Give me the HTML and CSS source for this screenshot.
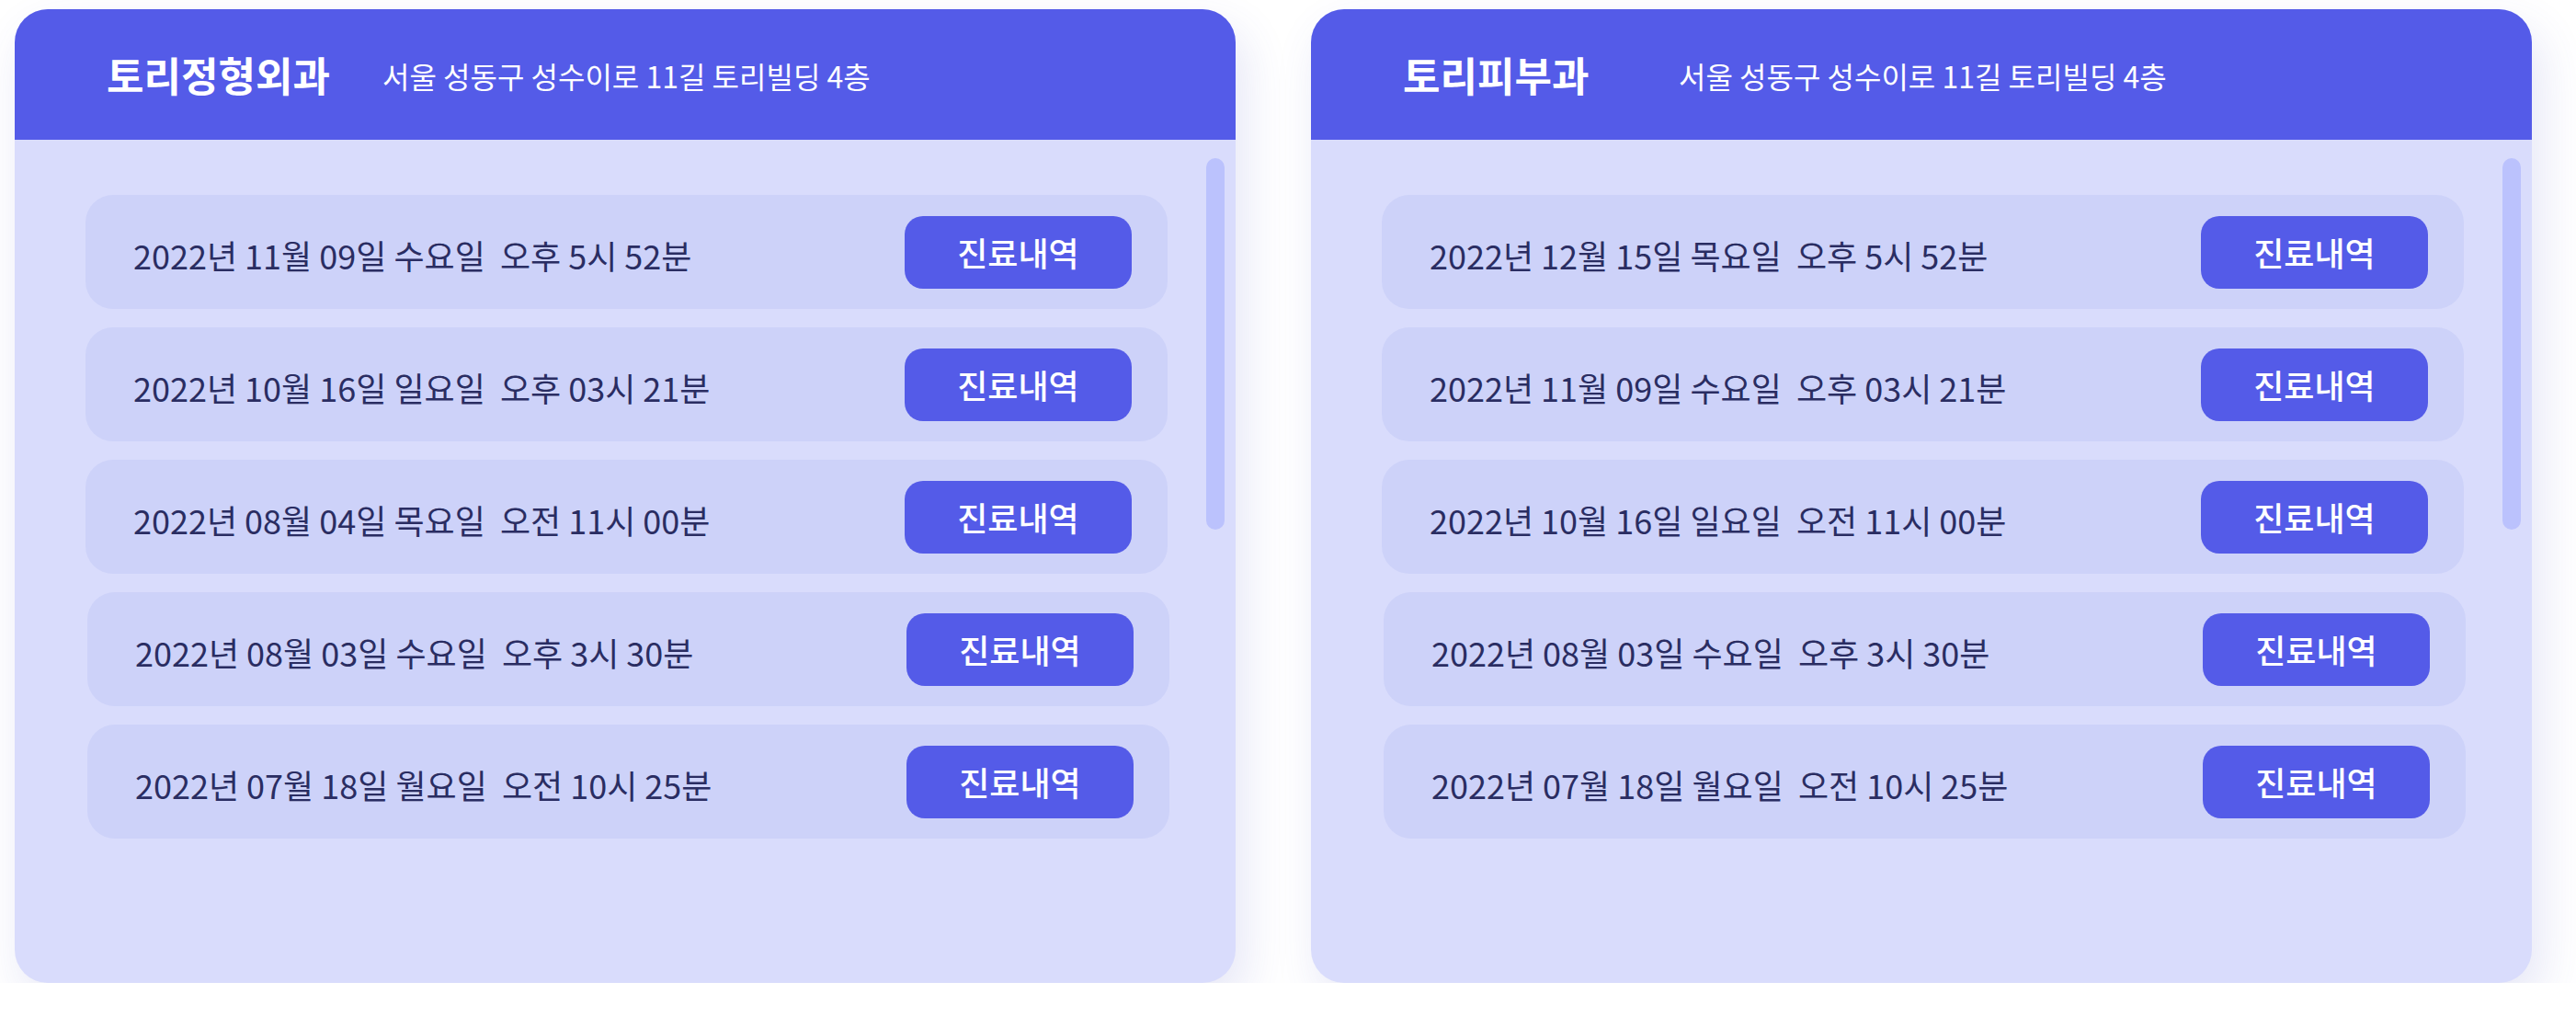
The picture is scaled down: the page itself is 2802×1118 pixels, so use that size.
FILE: index.html
```html
<!DOCTYPE html>
<html>
  <head>
    <meta charset="utf-8">
    <title>진료 예약 내역</title>
    <link rel="stylesheet" href="styles.css">
  </head>
  <body>
    <div class="page">

      <!-- 토리정형외과 -->
      <section class="card">
        <header class="card-head">
          <h2 class="clinic-name">토리정형외과</h2>
          <p class="clinic-addr">서울 성동구 성수이로 11길 토리빌딩 4층</p>
        </header>
        <div class="card-body">
          <ul class="visits">
            <li class="visit">
              <span class="visit-date">2022년 11월 09일 수요일&nbsp; 오후 5시 52분</span>
              <button class="btn">진료내역</button>
            </li>
            <li class="visit">
              <span class="visit-date">2022년 10월 16일 일요일&nbsp; 오후 03시 21분</span>
              <button class="btn">진료내역</button>
            </li>
            <li class="visit">
              <span class="visit-date">2022년 08월 04일 목요일&nbsp; 오전 11시 00분</span>
              <button class="btn">진료내역</button>
            </li>
            <li class="visit nudge">
              <span class="visit-date">2022년 08월 03일 수요일&nbsp; 오후 3시 30분</span>
              <button class="btn">진료내역</button>
            </li>
            <li class="visit nudge">
              <span class="visit-date">2022년 07월 18일 월요일&nbsp; 오전 10시 25분</span>
              <button class="btn">진료내역</button>
            </li>
          </ul>
          <div class="thumb"></div>
        </div>
      </section>

      <!-- 토리피부과 -->
      <section class="card">
        <header class="card-head">
          <h2 class="clinic-name">토리피부과</h2>
          <p class="clinic-addr">서울 성동구 성수이로 11길 토리빌딩 4층</p>
        </header>
        <div class="card-body">
          <ul class="visits">
            <li class="visit">
              <span class="visit-date">2022년 12월 15일 목요일&nbsp; 오후 5시 52분</span>
              <button class="btn">진료내역</button>
            </li>
            <li class="visit">
              <span class="visit-date">2022년 11월 09일 수요일&nbsp; 오후 03시 21분</span>
              <button class="btn">진료내역</button>
            </li>
            <li class="visit">
              <span class="visit-date">2022년 10월 16일 일요일&nbsp; 오전 11시 00분</span>
              <button class="btn">진료내역</button>
            </li>
            <li class="visit nudge">
              <span class="visit-date">2022년 08월 03일 수요일&nbsp; 오후 3시 30분</span>
              <button class="btn">진료내역</button>
            </li>
            <li class="visit nudge">
              <span class="visit-date">2022년 07월 18일 월요일&nbsp; 오전 10시 25분</span>
              <button class="btn">진료내역</button>
            </li>
          </ul>
          <div class="thumb"></div>
        </div>
      </section>

    </div>
  </body>
</html>
```

FILE: styles.css
```css
body {
  margin: 0;
  background-color: #fff;
  font-family: "Noto Sans CJK KR", "Noto Sans", sans-serif;
}

.page {
  display: flex;
  gap: 82px;
  padding: 10px 0 0 16px;
}

.card {
  width: 1328px;
  height: 1059px;
  border-radius: 36px;
  overflow: hidden;
  background-color: #d9dcfc;
  box-shadow: 10px 22px 50px rgba(70, 80, 190, 0.14);
}

.card-head {
  display: flex;
  align-items: center;
  height: 142px;
  padding-left: 100px;
  background-color: #545be8;
  color: #fff;
}

.clinic-name {
  width: 300px;
  margin: 0;
  font-size: 44px;
  font-weight: 700;
}

.clinic-addr {
  margin: 0;
  padding-top: 2px;
  font-size: 32px;
  font-weight: 400;
}

.card-body {
  display: flex;
  align-items: flex-start;
  padding: 20px 0 0 77px;
}

.visits {
  display: flex;
  flex-direction: column;
  gap: 20px;
  width: 1177px;
  margin: 40px 0 0;
  padding: 0;
  list-style: none;
}

.visit {
  display: flex;
  align-items: center;
  justify-content: space-between;
  height: 124px;
  padding: 0 39px 0 52px;
  border-radius: 30px;
  background-color: #cdd2f9;
}

.visit.nudge {
  margin-left: 2px;
  margin-right: -2px;
}

.visit-date {
  padding-top: 6px;
  font-size: 36px;
  color: #2a2d62;
}

.btn {
  width: 247px;
  height: 79px;
  border: none;
  border-radius: 20px;
  background-color: #545be8;
  color: #fff;
  font-family: inherit;
  font-size: 36px;
  font-weight: 500;
}

.thumb {
  width: 20px;
  height: 404px;
  margin-left: 42px;
  border-radius: 10px;
  background-color: #bbc2fd;
}
```
